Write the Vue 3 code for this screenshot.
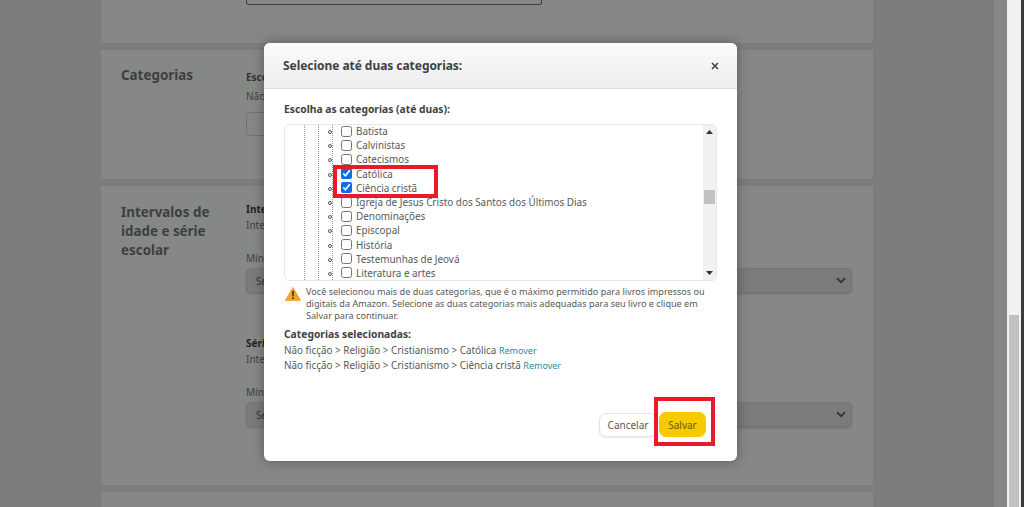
<script setup>
const rows = [
  { label: 'Batista' },
  { label: 'Calvinistas' },
  { label: 'Catecismos' },
  { label: 'Católica', checked: true },
  { label: 'Ciência cristã', checked: true },
  { label: 'Igreja de Jesus Cristo dos Santos dos Últimos Dias' },
  { label: 'Denominações' },
  { label: 'Episcopal' },
  { label: 'História' },
  { label: 'Testemunhas de Jeová' },
  { label: 'Literatura e artes' }
]
const selected = ['Católica', 'Ciência cristã']
</script>

<template>
  <div class="page">
    <main class="main">
      <section class="card card-top">
        <div class="top-input"></div>
      </section>
      <section class="card card-cat">
        <h2 class="card-title">Categorias</h2>
        <div class="card-body">
          <p class="strong-muted">Escolha as categorias</p>
          <p class="muted cat-note">Não há categorias selecionadas</p>
          <div class="cat-button"></div>
        </div>
      </section>
      <section class="card card-age">
        <h2 class="card-title">Intervalos de<br>idade e série<br>escolar</h2>
        <div class="card-body age-body">
          <p class="strong">Intervalo de idade</p>
          <p class="muted sub">Intervalo de idade</p>
          <p class="muted min">Mínimo</p>
          <div class="select"><span>Selecionar</span><svg width="10" height="7" viewBox="0 0 10 7"><path d="M1 1.2 5 5.2 9 1.2" fill="none" stroke="#333" stroke-width="1.7"/></svg></div>
          <p class="strong grade">Série escolar</p>
          <p class="muted sub">Intervalo de série</p>
          <p class="muted min">Mínimo</p>
          <div class="select"><span>Selecionar</span><svg width="10" height="7" viewBox="0 0 10 7"><path d="M1 1.2 5 5.2 9 1.2" fill="none" stroke="#333" stroke-width="1.7"/></svg></div>
        </div>
      </section>
      <section class="card card-end"></section>
    </main>
    <div class="gutter"></div>
    <div class="scrollbar"><div class="scroll-thumb"></div></div>
    <div class="edge"></div>

    <div class="modal">
      <header class="modal-head">
        <h1>Selecione até duas categorias:</h1>
        <svg class="close" width="8" height="8" viewBox="0 0 8 8"><path d="M1 1 7 7M7 1 1 7" stroke="#444" stroke-width="1.6"/></svg>
      </header>
      <div class="modal-body">
        <h3 class="choose">Escolha as categorias (até duas):</h3>
        <div class="tree-box">
          <div class="tree">
            <i class="guide g1"></i><i class="guide g2"></i><i class="guide g3"></i>
            <label v-for="r in rows" :key="r.label" class="row">
              <i class="bullet"></i>
              <input type="checkbox" :checked="r.checked" />
              <span>{{ r.label }}</span>
            </label>
          </div>
          <div class="tree-scroll">
            <svg width="7" height="4" viewBox="0 0 7 4"><path d="M3.5 0 7 4H0z" fill="#333"/></svg>
            <div class="tree-thumb"></div>
            <svg width="7" height="4" viewBox="0 0 7 4"><path d="M0 0h7L3.5 4z" fill="#333"/></svg>
          </div>
        </div>
        <div class="warning">
          <svg width="16" height="14" viewBox="0 0 16 14"><path d="M8 .6 15.6 13.4H.4z" fill="#f0a52c" stroke="#f0a52c" stroke-linejoin="round"/><path d="M7.2 4h1.6l-.2 5.6H7.4zM7.2 10.4h1.6V12H7.2z" fill="#222"/></svg>
          <p>Você selecionou mais de duas categorias, que é o máximo permitido para livros impressos ou digitais da Amazon. Selecione as duas categorias mais adequadas para seu livro e clique em Salvar para continuar.</p>
        </div>
        <h3 class="sel-title">Categorias selecionadas:</h3>
        <p v-for="s in selected" :key="s" class="sel-line">Não ficção &gt; Religião &gt; Cristianismo &gt; {{ s }} <a>Remover</a></p>
        <div class="actions">
          <button class="btn cancel">Cancelar</button>
          <button class="btn save">Salvar</button>
        </div>
      </div>
    </div>

    <div class="mark mark-a"></div>
    <div class="mark mark-b"></div>
  </div>
</template>

<style>
html, body { margin: 0; overflow: hidden; }
</style>

<style scoped>
.page {
  position: relative;
  display: flex;
  width: 1024px;
  height: 507px;
  overflow: hidden;
  background: #7b7d7b;
  font-family: "Noto Sans", "Open Sans", sans-serif;
  color: #3f4242;
}
p, h1, h2, h3 { margin: 0; }
.main {
  width: 994px;
  box-sizing: border-box;
  padding: 0 121px 0 101px;
  display: flex;
  flex-direction: column;
  gap: 7px;
  flex: none;
}
.card { background: #868886; box-sizing: border-box; display: flex; padding-left: 20px; gap: 0; flex: none; }
.card-top { height: 43px; padding-left: 145px; align-items: flex-start; }
.top-input { width: 296px; height: 5px; border: 1px solid #3e4040; border-top: 0; border-radius: 0 0 3px 3px; box-sizing: border-box; }
.card-cat { height: 129px; padding-top: 16px; }
.card-age { height: 299px; padding-top: 17px; }
.card-end { flex: 1; }
.card-title { width: 125px; flex: none; font-size: 13.4px; line-height: 19px; font-weight: 700; color: #3c3f3f; }
.card-body { flex: 1; padding-right: 21px; font-size: 10px; }
.age-body { margin-top: -1px; }
.strong-muted { margin-top: 4px; line-height: 14px; font-weight: 700; color: #333; }
.strong { line-height: 14px; font-weight: 700; color: #222; }
.muted { line-height: 14px; color: #3d4040; }
.cat-note { margin-top: 5px; }
.cat-button { width: 80px; height: 24px; margin-top: 9px; border: 1px solid #6f716f; border-radius: 5px; box-sizing: border-box; }
.sub { margin-top: 2px; }
.min { margin-top: 19px; }
.grade { margin-top: 43px; }
.select {
  margin-top: 3px;
  height: 25px;
  display: flex;
  align-items: center;
  justify-content: space-between;
  padding: 0 5px 0 9px;
  box-sizing: border-box;
  background: #7a7c7a;
  border: 1px solid #757775;
  border-radius: 5px;
  box-shadow: 0 1px 2px rgba(0, 0, 0, .2);
  color: #333;
}
.gutter { width: 13px; flex: none; background: #868886; }
.scrollbar { width: 14px; flex: none; background: #f1f1f1; display: flex; flex-direction: column; justify-content: flex-end; padding: 0 2px; box-sizing: border-box; }
.scroll-thumb { height: 192px; background: #c1c1c1; }
.edge { flex: 1; background: #3a3a3a; }

.modal {
  position: absolute;
  left: 264px;
  top: 43px;
  width: 473px;
  height: 418px;
  background: #fff;
  border-radius: 6px;
  overflow: hidden;
  box-shadow: 0 0 12px rgba(0, 0, 0, .35);
  display: flex;
  flex-direction: column;
  color: #565959;
}
.modal-head {
  height: 46px;
  flex: none;
  box-sizing: border-box;
  display: flex;
  align-items: center;
  justify-content: space-between;
  padding: 0 18px 0 19px;
  background: linear-gradient(#fcfcfc, #ececec);
  border-bottom: 1px solid #ddd;
}
.modal-head h1 { font-size: 12px; letter-spacing: -.05px; line-height: 18px; font-weight: 700; color: #3e4242; }
.modal-body { flex: 1; display: flex; flex-direction: column; padding: 13px 20px 24px 20px; font-size: 10px; }
.choose { font-size: 10.3px; line-height: 14px; font-weight: 700; color: #3e4242; }
.tree-box {
  margin-top: 8px;
  height: 157px;
  flex: none;
  display: flex;
  border: 1px solid #e7e7e7;
  border-radius: 5px;
  overflow: hidden;
  box-sizing: border-box;
}
.tree { position: relative; flex: 1; padding-left: 56px; margin-top: -1px; }
.guide { position: absolute; top: 0; bottom: 0; width: 0; border-left: 1px dotted #999; }
.g1 { left: 19px; }
.g2 { left: 33px; }
.g3 { left: 47px; }
.row { position: relative; display: flex; align-items: center; height: 14.2px; font-size: 9.9px; line-height: 14px; gap: 4px; color: #565959; }
.row input { width: 11px; height: 11px; margin: 0; flex: none; accent-color: #0a6cf5; }
.bullet { position: absolute; left: -13px; top: 6px; width: 4px; height: 4px; box-sizing: border-box; border: 1px solid #555; border-radius: 50%; background: #fff; }
.tree-scroll { width: 13px; flex: none; background: #f1f1f1; display: flex; flex-direction: column; align-items: center; justify-content: space-between; padding: 5px 0 5px; box-sizing: border-box; position: relative; }
.tree-thumb { position: absolute; left: 1px; right: 1px; top: 65px; height: 14px; background: #c1c1c1; }
.warning { display: flex; gap: 5px; margin-top: 6px; padding-left: 1px; }
.warning svg { flex: none; }
.warning p { width: 400px; font-size: 9.1px; line-height: 12px; margin-top: -1px; }
.sel-title { margin-top: 5px; font-size: 10.3px; line-height: 14px; font-weight: 700; color: #3e4242; }
.sel-line { line-height: 15px; font-size: 9.9px; }
.sel-title + .sel-line { margin-top: 2px; }
.sel-line a { color: #2a8a9e; font-size: 9px; }
.actions { margin-top: auto; display: flex; justify-content: flex-end; gap: 2px; padding-right: 11px; align-items: center; }
.btn { font-family: inherit; font-size: 10px; border-radius: 7px; box-sizing: border-box; padding: 0; }
.cancel { width: 58px; height: 24px; background: #fff; border: 1px solid #e3e5e5; color: #565959; box-shadow: 0 1px 2px rgba(0,0,0,.08); }
.save { width: 47px; height: 25px; background: #f7ca00; border: 1px solid #f7ca00; color: #6a5a10; }

.mark { position: absolute; box-sizing: border-box; border: 4px solid #ea1a2c; }
.mark-a { left: 333px; top: 165px; width: 105px; height: 33px; }
.mark-b { left: 654px; top: 397px; width: 61px; height: 49px; }
</style>
